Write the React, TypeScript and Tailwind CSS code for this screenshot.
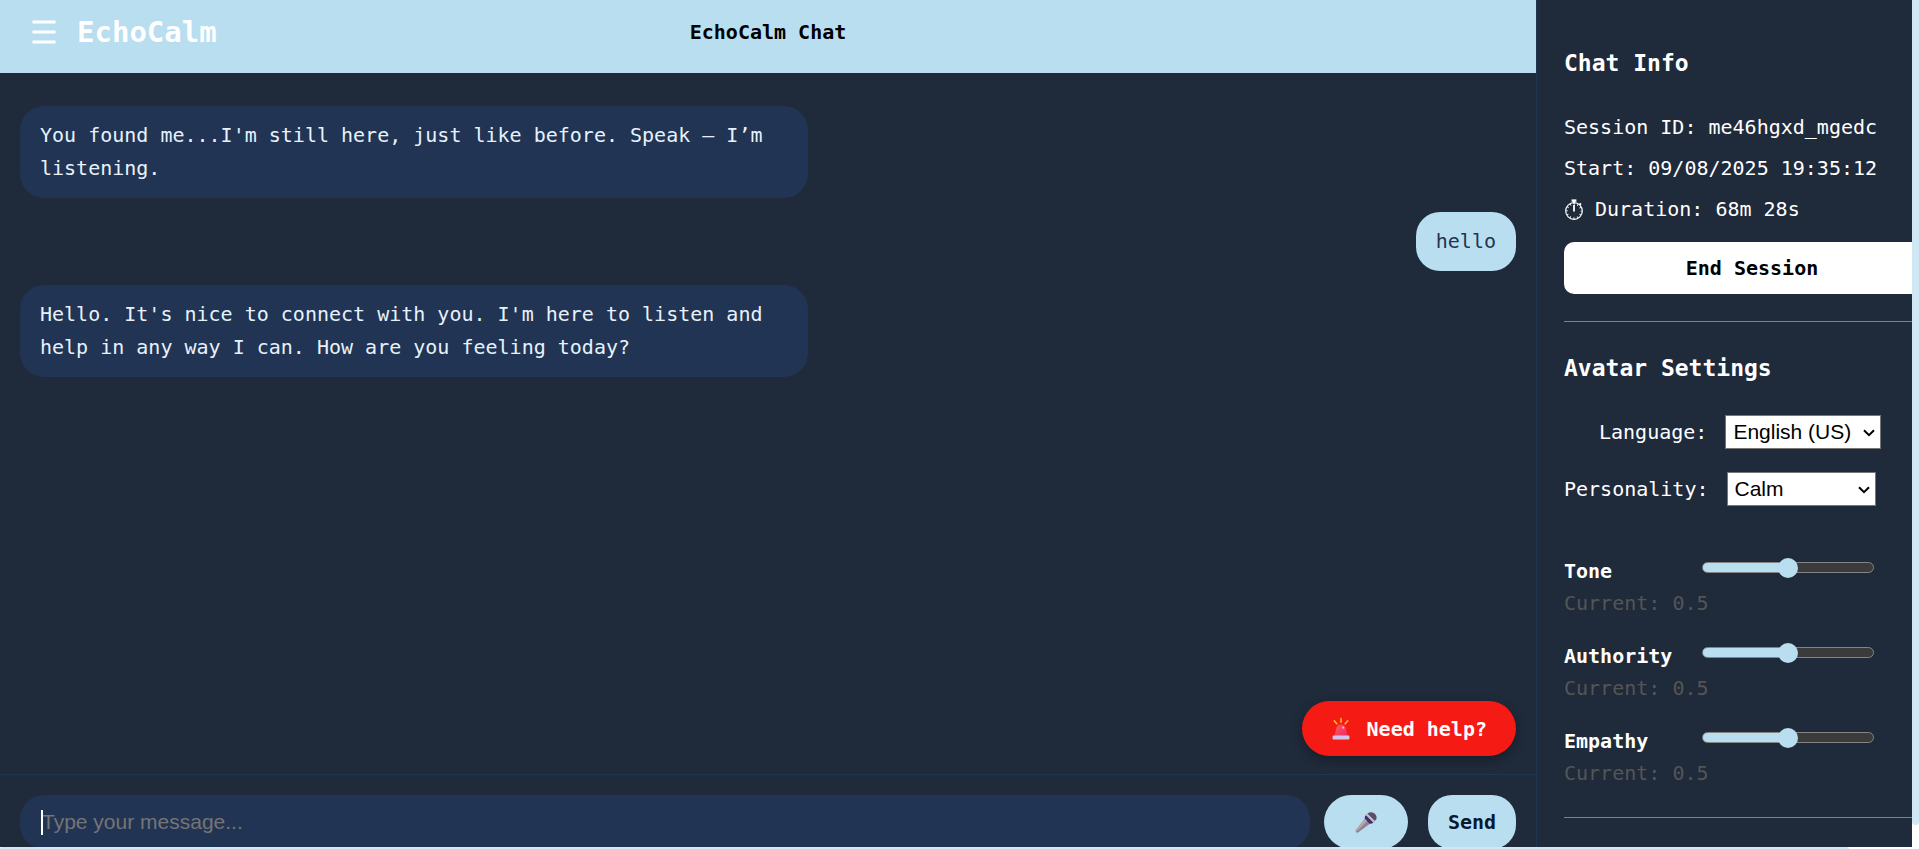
import { useState } from "react";

type Message = { id: number; from: "avatar" | "user"; text: string };

const messages: Message[] = [
  { id: 1, from: "avatar", text: "You found me...I'm still here, just like before. Speak — I’m listening." },
  { id: 2, from: "user", text: "hello" },
  {
    id: 3,
    from: "avatar",
    text: "Hello. It's nice to connect with you. I'm here to listen and help in any way I can. How are you feeling today?",
  },
];

function MenuIcon() {
  return (
    <svg viewBox="0 0 24 24" className="size-6" aria-hidden="true">
      <path d="M0.5 2h23M0.5 12h23M0.5 22h23" stroke="currentColor" strokeWidth="3" />
    </svg>
  );
}

function StopwatchIcon() {
  return (
    <svg viewBox="0 0 20 22" className="h-[22px] w-5 shrink-0" fill="none" stroke="currentColor" aria-hidden="true">
      <circle cx="10" cy="12" r="8.3" strokeWidth="1.2" />
      <path d="M7.6 1.6h4.8" strokeWidth="2.4" />
      <path d="M10 2v2.5M15.4 4.4l1.6 1.4" strokeWidth="2" />
      <path d="M10 6v6.5" strokeWidth="1.8" />
      <circle cx="10" cy="12" r="7" strokeWidth="1.8" strokeDasharray="0.8 2.865" strokeDashoffset="0.4" />
    </svg>
  );
}

function SirenIcon() {
  return (
    <svg viewBox="0 0 20 24" className="h-6 w-5 shrink-0" aria-hidden="true">
      <defs>
        <linearGradient id="siren-dome" x1="0" y1="0" x2="1" y2="1">
          <stop offset="0" stopColor="#fb5a63" />
          <stop offset="1" stopColor="#ec2a62" />
        </linearGradient>
      </defs>
      <path d="M10 1.6v3.6M3.2 3.8l2.6 3M16.8 3.8l-2.6 3" stroke="#ffb52e" strokeWidth="1.6" strokeLinecap="round" />
      <path d="M3.4 19.6 5 12Q6 7.4 10 7.4t5 4.6l1.6 7.6z" fill="url(#siren-dome)" />
      <circle cx="12.2" cy="10.6" r="1.1" fill="#ffc0c8" />
      <rect x="1.6" y="18.6" width="16.8" height="4" rx="0.8" fill="#d5c3ee" />
    </svg>
  );
}

function MicrophoneIcon() {
  return (
    <svg viewBox="0 0 24 24" className="size-6" aria-hidden="true">
      <path d="M1.6 20.2 11 8.6l5.2 4.8L4 22.4q-1 .6-1.8-.2t-.6-2z" fill="#8f838f" />
      <path d="M1.8 20 11 8.6l2.4 2.2L2.6 21.6z" fill="#b3a8b0" />
      <path d="M10.8 8.6Q10.4 6.4 12 5l7.4 7.4q-1.8 1.8-4.2 1.2z" fill="#43306a" />
      <path d="M13.4 3.8q2.4-2 5.2-1.2t3.8 3.4-1.6 5z" fill="#5d4c66" />
      <path d="m12.6 4.4 7.4 7.2" stroke="#c3bac6" strokeWidth="1.9" strokeLinecap="round" />
    </svg>
  );
}

function Choice({ label, options, width, indent }: { label: string; options: string[]; width: string; indent: string }) {
  const id = label.toLowerCase();
  return (
    <div className={`flex items-center ${indent}`}>
      <label htmlFor={id}>{label}:</label>
      <div className={`relative ml-[18px] h-[34px] ${width}`}>
        <select
          id={id}
          className="h-full w-full appearance-none border border-[#767676] bg-white pl-[7px] font-['Liberation_Sans',sans-serif] text-[21px] leading-7 text-black"
        >
          {options.map((option) => (
            <option key={option}>{option}</option>
          ))}
        </select>
        <svg viewBox="0 0 12 8" className="pointer-events-none absolute top-[14px] right-[6px] h-2 w-3" aria-hidden="true">
          <path d="M1 1.2 6 6.2 11 1.2" fill="none" stroke="#000" strokeWidth="2" />
        </svg>
      </div>
    </div>
  );
}

function Trait({ name }: { name: string }) {
  const [value, setValue] = useState(0.5);
  const id = name.toLowerCase();
  return (
    <div className="h-[85px]">
      <div className="flex h-[33px] items-center">
        <label htmlFor={id} className="w-[138px] font-bold">
          {name}
        </label>
        <input
          id={id}
          type="range"
          min={0}
          max={1}
          step={0.1}
          value={value}
          onChange={(event) => setValue(Number(event.target.value))}
          style={{ backgroundImage: `linear-gradient(to right, #b8def0 ${value * 100}%, #3b3b3b ${value * 100}%)` }}
          className="mb-1.5 h-[11px] w-[172px] appearance-none rounded-full border border-[#858585] [&::-webkit-slider-thumb]:size-5 [&::-webkit-slider-thumb]:appearance-none [&::-webkit-slider-thumb]:rounded-full [&::-webkit-slider-thumb]:bg-[#b8def0]"
        />
      </div>
      <p className="leading-[33px] text-[#555]">Current: {value}</p>
    </div>
  );
}

function ChatPanel() {
  return (
    <section className="flex min-w-0 flex-1 flex-col">
      <header className="grid h-[73px] shrink-0 grid-cols-[1fr_auto_1fr] bg-[#b8def0] px-8 pb-[9px]">
        <div className="flex items-center gap-[21px] text-white">
          <button type="button" aria-label="Menu">
            <MenuIcon />
          </button>
          <span className="text-[29px] leading-9 font-bold">EchoCalm</span>
        </div>
        <h1 className="self-center font-bold text-black">EchoCalm Chat</h1>
      </header>
      <div className="flex min-h-0 flex-1 flex-col items-start gap-[14px] px-5 pt-[33px]">
        {messages.map((message) => (
          <p
            key={message.id}
            className={
              message.from === "user"
                ? "self-end rounded-3xl bg-[#b8def0] px-5 py-[13px] leading-[33px] text-[#223454]"
                : "w-full max-w-[788px] rounded-3xl bg-[#223454] px-5 py-[13px] leading-[33px] text-[#e6f2fb]"
            }
          >
            {message.text}
          </p>
        ))}
        <button
          type="button"
          className="mt-auto mb-[18px] flex h-[55px] items-center gap-4 self-end rounded-full bg-[#f61a14] px-[29px] font-bold text-white shadow-[0_4px_12px_rgba(0,0,0,0.3)]"
        >
          <SirenIcon />
          Need help?
        </button>
      </div>
      <form className="flex h-[73px] shrink-0 items-start border-t border-[#223454] px-5 pt-5" onSubmit={(event) => event.preventDefault()}>
        <div className="relative min-w-0 flex-1">
          <input
            type="text"
            aria-label="Message"
            placeholder="Type your message..."
            autoFocus
            className="peer block h-[54px] w-full rounded-3xl bg-[#223454] px-[22px] font-['Liberation_Sans',sans-serif] text-[21px] text-white outline-none placeholder:text-[#757575] placeholder-shown:caret-transparent"
          />
          <span className="absolute top-[15px] left-[21px] hidden h-[25px] w-0.5 bg-white peer-placeholder-shown:peer-focus:block" />
        </div>
        <button type="button" aria-label="Record" className="ml-[14px] flex h-[54px] w-[84px] items-center justify-center rounded-full bg-[#b8def0]">
          <MicrophoneIcon />
        </button>
        <button type="submit" className="ml-5 h-[54px] w-[88px] rounded-3xl bg-[#b8def0] font-bold text-[#0b1930]">
          Send
        </button>
      </form>
    </section>
  );
}

function InfoPanel() {
  return (
    <aside className="w-[376px] shrink-0 overflow-clip border-l border-[#223454] pl-[27px] text-white">
      <div className="w-[376px]">
        <h2 className="pt-[47px] text-[23px] leading-8 font-bold">Chat Info</h2>
        <div className="mt-8 flex flex-col gap-2 leading-[33px]">
          <p>Session ID: me46hgxd_mgedc</p>
          <p>Start: 09/08/2025 19:35:12</p>
          <p className="flex items-center gap-[11px]">
            <StopwatchIcon />
            Duration: 68m 28s
          </p>
        </div>
        <button type="button" className="mt-4 block h-[52px] w-full rounded-[10px] bg-white font-bold text-black">
          End Session
        </button>
        <hr className="mt-[27px] border-[#78808b]" />
        <h2 className="mt-[30px] text-[23px] leading-8 font-bold">Avatar Settings</h2>
        <div className="mt-[31px] flex flex-col gap-[23px]">
          <Choice label="Language" options={["English (US)", "English (UK)", "Spanish"]} width="w-[156px]" indent="pl-[35px]" />
          <Choice label="Personality" options={["Calm", "Supportive", "Direct"]} width="w-[149px]" indent="pl-0" />
        </div>
        <div className="mt-12">
          <Trait name="Tone" />
          <Trait name="Authority" />
          <Trait name="Empathy" />
        </div>
        <hr className="mt-2 border-[#78808b]" />
      </div>
    </aside>
  );
}

export default function App() {
  return (
    <div className="flex h-screen flex-col overflow-clip bg-white font-['DejaVu_Sans_Mono',monospace] text-[20px]">
      <div className="flex min-h-0 flex-1">
        <main className="flex min-w-0 flex-1 overflow-clip bg-[#1f2a3b]">
          <ChatPanel />
          <InfoPanel />
        </main>
        <div className="w-[7px] shrink-0 pb-[22px]">
          <div className="h-full rounded-b-full bg-[#d0e8f3]" />
        </div>
      </div>
      <div className="h-0.5 shrink-0 pr-[70px]">
        <div className="h-full rounded-t-full bg-[#d0e8f3]" />
      </div>
    </div>
  );
}
